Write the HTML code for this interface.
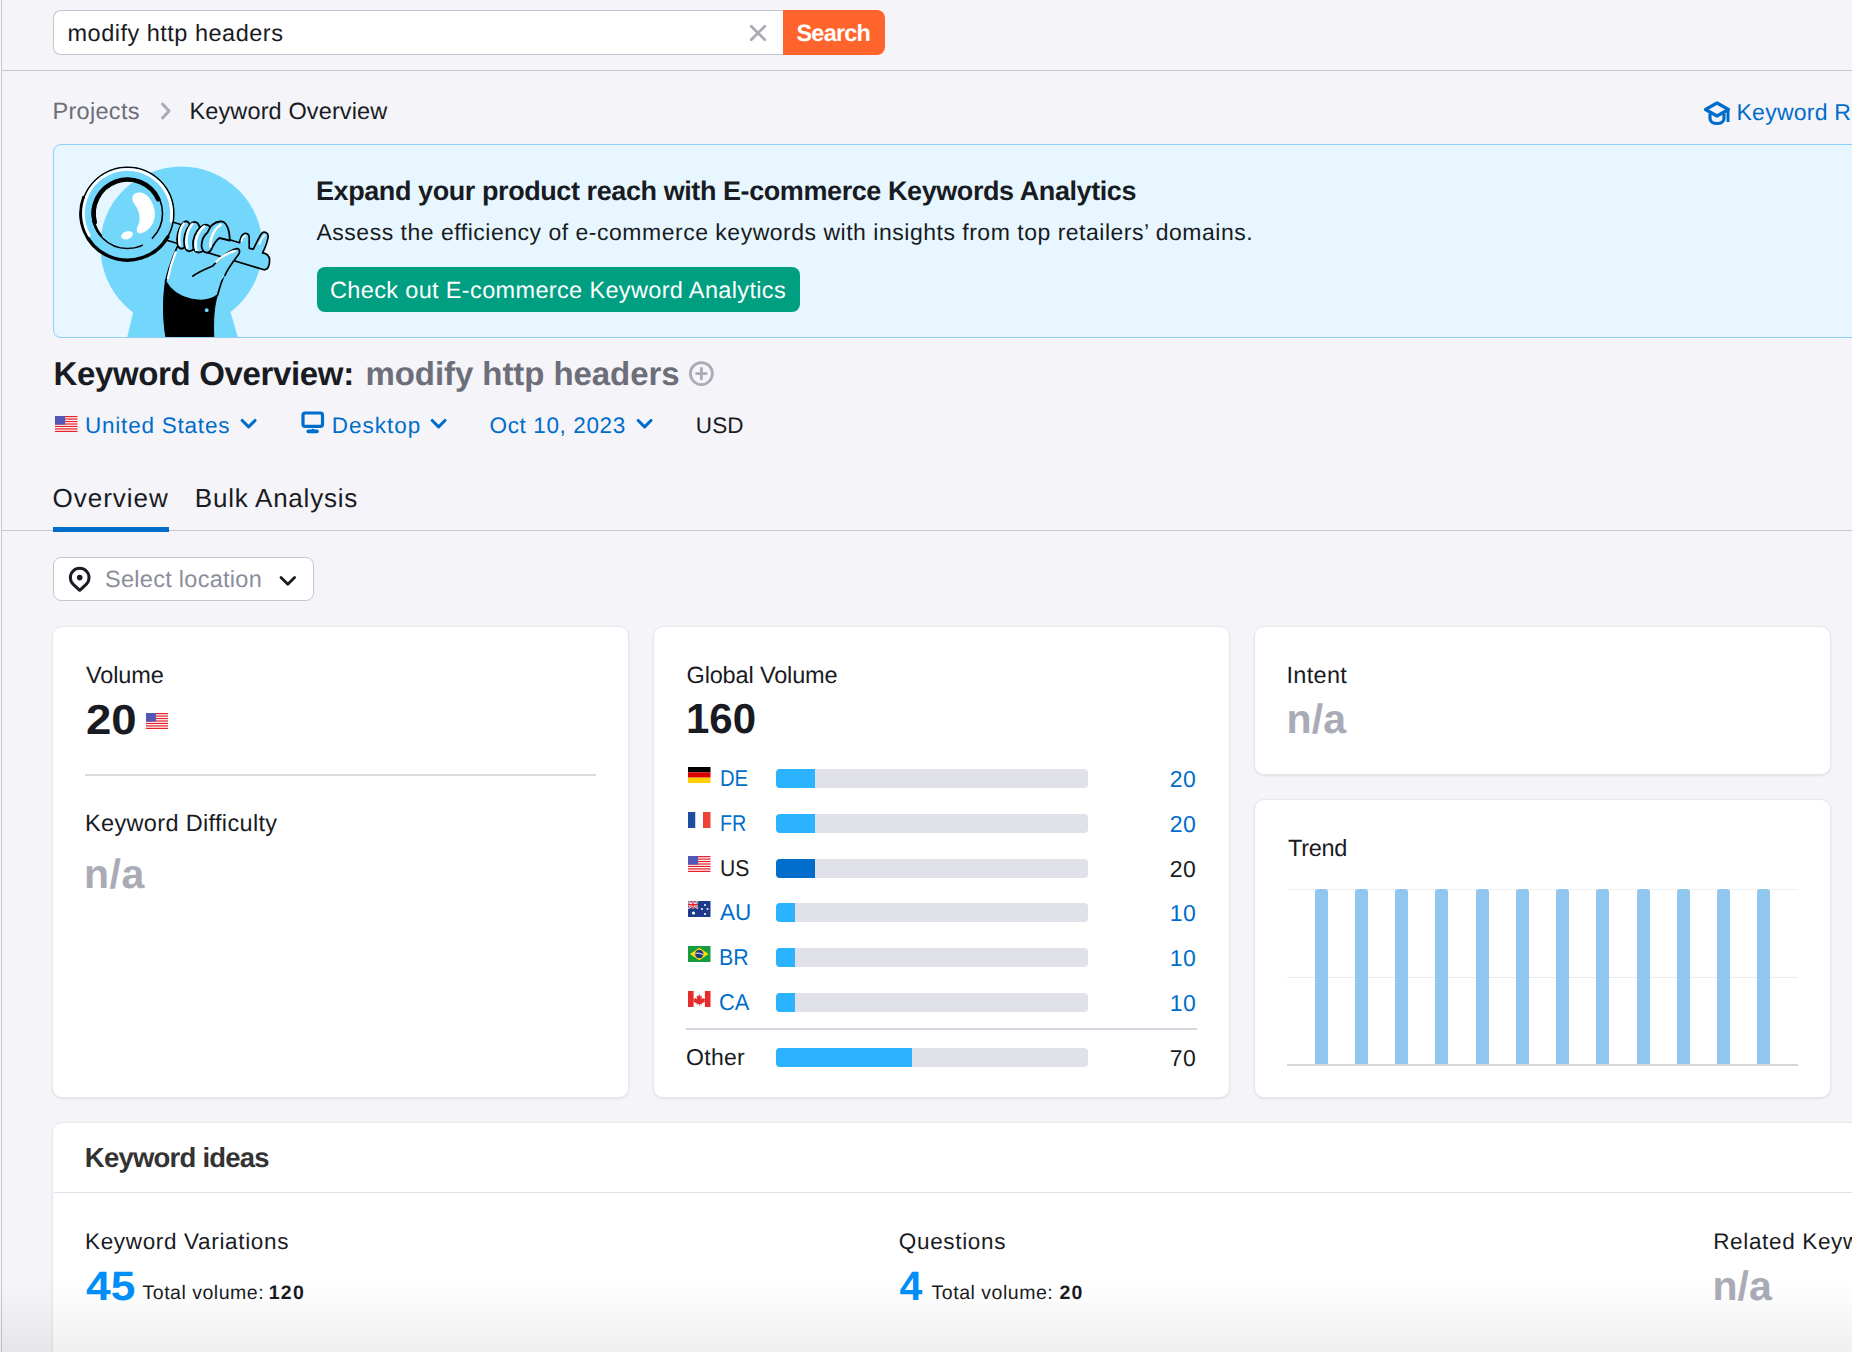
<!DOCTYPE html><html><head><meta charset="utf-8"><style>
*{box-sizing:border-box;margin:0;padding:0}
html,body{width:1852px;height:1352px;overflow:hidden}
body{background:#F4F4F9;font-family:"Liberation Sans",sans-serif;position:relative;text-rendering:geometricPrecision}
.t{position:absolute;white-space:nowrap}
.r{position:absolute}
svg{position:absolute;overflow:visible}
</style></head><body>
<div class="r" style="left:0px;top:0px;width:1px;height:1352px;background:#F8F9FC"></div>
<div class="r" style="left:1px;top:0px;width:1px;height:1352px;background:#C8C8CC"></div>
<div class="r" style="left:2px;top:70px;width:1850px;height:1px;background:#C4C7CF"></div>
<div class="r" style="left:53px;top:10px;width:731px;height:45px;background:#fff;border:1px solid #C4C7CF;border-right:none;border-radius:8px 0 0 8px"></div>
<div class="r" style="left:783px;top:10px;width:102px;height:45px;background:#FF642D;border-radius:0 8px 8px 0"></div>
<div class="t" style="left:67.50px;top:22.25px;font-size:23.5px;line-height:23.5px;font-weight:400;color:#191B23;letter-spacing:0.5px;">modify http headers</div>
<svg style="left:749px;top:24px" width="18" height="18"><path d="M2.2 2.2L15.8 15.8M15.8 2.2L2.2 15.8" stroke="#A9ABB6" stroke-width="2.8" stroke-linecap="round"/></svg>
<div class="t" style="left:796.50px;top:21.95px;font-size:23.5px;line-height:23.5px;font-weight:700;color:#fff;letter-spacing:-0.8px;">Search</div>
<div class="t" style="left:52.50px;top:99.95px;font-size:23.5px;line-height:23.5px;font-weight:400;color:#6C6E79;letter-spacing:0.3px;">Projects</div>
<svg style="left:158px;top:100px" width="16" height="22"><polyline points="4.5,4 11,11 4.5,18" fill="none" stroke="#A9ABB6" stroke-width="3" stroke-linecap="round" stroke-linejoin="round"/></svg>
<div class="t" style="left:189.50px;top:99.95px;font-size:23.5px;line-height:23.5px;font-weight:400;color:#191B23;letter-spacing:0.12px;">Keyword Overview</div>
<svg style="left:1703px;top:100px" width="28" height="26" viewBox="0 0 28 26"><path d="M14 3L25.5 9.5L14 16L2.5 9.5Z" fill="none" stroke="#006DCA" stroke-width="3.2" stroke-linejoin="round"/><path d="M7 13.5V18.5C7 21.5 10 23.5 14 23.5C18 23.5 21 21.5 21 18.5V13.5" fill="none" stroke="#006DCA" stroke-width="3.2"/><path d="M25 10V22" stroke="#006DCA" stroke-width="3"/></svg>
<div class="t" style="left:1736.50px;top:100.90px;font-size:23px;line-height:23px;font-weight:400;color:#006DCA;letter-spacing:0.25px;">Keyword Research course</div>
<div class="r" style="left:53px;top:144px;width:1850px;height:194px;background:#E8F7FF;border:1px solid #8FD0FB;border-radius:8px"></div>
<svg style="left:53px;top:144px" width="260" height="194" viewBox="53 144 260 194">
<defs>
<clipPath id="bc"><rect x="54" y="145" width="258" height="192" rx="7"/></clipPath>
<clipPath id="lens"><circle cx="127.5" cy="213.5" r="34"/></clipPath>
</defs>
<g clip-path="url(#bc)">
<circle cx="181.5" cy="247.5" r="81" fill="#73D7FC"/>
<path d="M136 300H227L238 338H127Z" fill="#73D7FC"/>
<path d="M165.5 281 C163 296 162.5 318 166 338 H213.8 C213 320 214 306 217.5 295 C206 303 182 306 165.5 281Z" fill="#000" stroke="#000" stroke-width="1"/>
<circle cx="206.7" cy="310.2" r="1.9" fill="#73D7FC"/>
<path d="M178.5 244 C173 256 168.5 268 165.5 281.5 C176 301 205 305 217.5 295.2 C220.5 284 226 267 236 252 L222 246 Z" fill="#73D7FC" stroke="#000" stroke-width="1.7" stroke-linejoin="round"/>
<path d="M176 251.5 C172 261 169.2 271 167.8 279" fill="none" stroke="#fff" stroke-width="2.2"/>

<path d="M171 221.5 L239.5 242.7 C240.5 238 241.5 235 243.2 234.2 C246 232 249.5 234 249.2 238 L249.2 248.3 L253.3 249.2 C256 244 259 237 262 233 C264 231 268.5 232.5 268.2 236.5 C267.5 242 264.5 249 262.6 252.9 C266 253.5 269.5 255.5 269.6 260 C269.6 266 268 270 264 269.8 L166 240 Z" fill="#73D7FC" stroke="#000" stroke-width="1.7" stroke-linejoin="round"/>
<path d="M241.5 241 C242 238 243 236.5 245 236" fill="none" stroke="#fff" stroke-width="1.8" stroke-linecap="round"/>
<path d="M259.5 244 C261 240 262.5 236.5 264.5 235.5" fill="none" stroke="#fff" stroke-width="1.8" stroke-linecap="round"/>
<circle cx="127.5" cy="213.5" r="46.3" fill="#73D7FC" stroke="#000" stroke-width="1.6"/>
<path d="M167.86 236.80 A46.6 46.6 0 0 1 83.71 197.56" fill="none" stroke="#000" stroke-width="3.4" stroke-linecap="round"/>
<path d="M89.31 235.55 A44.1 44.1 0 1 1 170.93 221.16" fill="none" stroke="#fff" stroke-width="2.8" stroke-linecap="round"/>
<circle cx="127.5" cy="213.5" r="34" fill="#E6F6FE"/>
<g clip-path="url(#lens)"><circle cx="176.9" cy="244.8" r="76.4" fill="#73D7FC"/></g>
<circle cx="127.5" cy="213.5" r="35" fill="none" stroke="#000" stroke-width="1.6"/>
<path d="M94.76 222.27 A33.9 33.9 0 0 1 158.22 199.17" fill="none" stroke="#000" stroke-width="4.6" stroke-linecap="round"/><path d="M100.99 235.74 A34.6 34.6 0 0 1 93.43 219.51" fill="none" stroke="#000" stroke-width="2.6" stroke-linecap="round"/>
<path d="M151.81 238.68 A35 35 0 0 1 142.84 244.96" fill="none" stroke="#73D7FC" stroke-width="2.6"/>
<path d="M134.5 194 C142 189 152.5 197 154.5 210 C156.5 222 149 231.5 141 233.3 C136 234 135.8 229 138.3 225 C141 219 139.5 211 135 205 C131.5 200 131.5 196 134.5 194 Z" fill="#fff"/>
<ellipse cx="127" cy="235.3" rx="6" ry="3.9" transform="rotate(-18 127 235.3)" fill="#fff"/>
<ellipse cx="183.8" cy="235" rx="6.2" ry="14" transform="rotate(12 183.8 235)" fill="#73D7FC" stroke="#000" stroke-width="1.8"/>
<path d="M180 246 C178 238 179.5 228 184.5 222.8" fill="none" stroke="#fff" stroke-width="2.3"/>
<ellipse cx="192" cy="236.6" rx="7.4" ry="15" transform="rotate(14 192 236.6)" fill="#73D7FC" stroke="#000" stroke-width="1.8"/>
<path d="M187.5 249 C185 240 187 229 193 223.3" fill="none" stroke="#fff" stroke-width="2.5"/>
<ellipse cx="202.3" cy="238.6" rx="8.2" ry="14.6" transform="rotate(22 202.3 238.6)" fill="#73D7FC" stroke="#000" stroke-width="1.8"/>
<path d="M196.5 251 C194 242 197.5 231 205 225.8" fill="none" stroke="#fff" stroke-width="2.5"/>
<path d="M204 251.5 C200 248 201 238 207.5 232.5 C210 226 215 222 220 221.5 C226 221 229.5 228 229.8 240.5 L219.4 238 C215 241 212.5 247 211 250 C209 253.5 206 253 204 251.5 Z" fill="#73D7FC" stroke="#000" stroke-width="1.8" stroke-linejoin="round"/>
<path d="M210.3 247.5 C210 238 214 228 221.5 224.5" fill="none" stroke="#fff" stroke-width="2.4"/>
<path d="M212.8 266 C220 258 229 250.5 236.5 248.6 C239.5 248.2 240.5 251.5 238.5 254.5 C232 263 227 270 224.8 276 L217 285 L200 269.5 Z" fill="#73D7FC"/>
<path d="M192.3 276.5 C199 271.5 206 269 212.8 265.9 C220 258 229 250.5 236.5 248.6 C239.5 248.2 240.5 251.5 238.5 254.5 C232 263 227 270 224.7 276" fill="none" stroke="#000" stroke-width="1.7" stroke-linejoin="round"/>
<path d="M215.5 262.5 C222 256 229 252 235.8 250.8" fill="none" stroke="#fff" stroke-width="2.2"/>
</g>
</svg>

<div class="t" style="left:316.00px;top:177.60px;font-size:27px;line-height:27px;font-weight:700;color:#191B23;letter-spacing:-0.42px;">Expand your product reach with E-commerce Keywords Analytics</div>
<div class="t" style="left:316.50px;top:221.00px;font-size:23px;line-height:23px;font-weight:400;color:#191B23;letter-spacing:0.51px;">Assess the efficiency of e-commerce keywords with insights from top retailers’ domains.</div>
<div class="r" style="left:317px;top:267px;width:483px;height:45px;background:#009F81;border-radius:8px"></div>
<div class="t" style="left:330.00px;top:279.15px;font-size:23.5px;line-height:23.5px;font-weight:400;color:#fff;letter-spacing:0.35px;">Check out E-commerce Keyword Analytics</div>
<div class="t" style="left:53.50px;top:357.00px;font-size:33px;line-height:33px;font-weight:700;color:#191B23;letter-spacing:-0.35px;">Keyword Overview:</div>
<div class="t" style="left:365.50px;top:357.00px;font-size:33px;line-height:33px;font-weight:700;color:#6C6E79;letter-spacing:-0.07px;">modify http headers</div>
<svg style="left:688px;top:360px" width="27" height="27"><circle cx="13.4" cy="13.6" r="11" fill="none" stroke="#A9ABB6" stroke-width="2.8"/><path d="M13.4 8.3V18.9M8.6 13.6H18.2" stroke="#A9ABB6" stroke-width="2.8" stroke-linecap="round"/></svg>
<svg style="left:54.8px;top:415.8px" width="22.5" height="16" viewBox="0 0 22.5 16"><rect width="22.5" height="16" fill="#fff"/><rect y="0.000" width="22.5" height="1.231" fill="#E8202A"/><rect y="2.462" width="22.5" height="1.231" fill="#E8202A"/><rect y="4.923" width="22.5" height="1.231" fill="#E8202A"/><rect y="7.385" width="22.5" height="1.231" fill="#E8202A"/><rect y="9.846" width="22.5" height="1.231" fill="#E8202A"/><rect y="12.308" width="22.5" height="1.231" fill="#E8202A"/><rect y="14.769" width="22.5" height="1.231" fill="#E8202A"/><rect width="10.12" height="8.615" fill="#5257B4"/></svg>
<div class="t" style="left:85.00px;top:414.65px;font-size:22.5px;line-height:22.5px;font-weight:400;color:#006DCA;letter-spacing:0.78px;">United States</div>
<svg style="left:239px;top:416px" width="20" height="16"><polyline points="3.2,4.5 9.6,10.8 16,4.5" fill="none" stroke="#006DCA" stroke-width="3.1" stroke-linecap="round" stroke-linejoin="round"/></svg>
<svg style="left:300px;top:410px" width="26" height="26"><rect x="3" y="3" width="19.5" height="13.3" rx="2" fill="none" stroke="#006DCA" stroke-width="3.2"/><path d="M8.2 21.4H17" stroke="#006DCA" stroke-width="3.6" stroke-linecap="round"/><path d="M10.6 20.2L12.9 18.5L15.2 20.2Z" fill="#006DCA"/></svg>
<div class="t" style="left:331.80px;top:414.65px;font-size:22.5px;line-height:22.5px;font-weight:400;color:#006DCA;letter-spacing:0.97px;">Desktop</div>
<svg style="left:429px;top:416px" width="20" height="16"><polyline points="3.2,4.5 9.6,10.8 16,4.5" fill="none" stroke="#006DCA" stroke-width="3.1" stroke-linecap="round" stroke-linejoin="round"/></svg>
<div class="t" style="left:489.50px;top:414.65px;font-size:22.5px;line-height:22.5px;font-weight:400;color:#006DCA;letter-spacing:0.63px;">Oct 10, 2023</div>
<svg style="left:634.5px;top:416px" width="20" height="16"><polyline points="3.2,4.5 9.6,10.8 16,4.5" fill="none" stroke="#006DCA" stroke-width="3.1" stroke-linecap="round" stroke-linejoin="round"/></svg>
<div class="t" style="left:695.80px;top:414.65px;font-size:22.5px;line-height:22.5px;font-weight:400;color:#191B23;letter-spacing:0.15px;">USD</div>
<div class="t" style="left:52.50px;top:485.20px;font-size:26px;line-height:26px;font-weight:400;color:#191B23;letter-spacing:1.0px;">Overview</div>
<div class="t" style="left:194.80px;top:485.20px;font-size:26px;line-height:26px;font-weight:400;color:#191B23;letter-spacing:0.77px;">Bulk Analysis</div>
<div class="r" style="left:2px;top:530px;width:1850px;height:1px;background:#C4C7CF"></div>
<div class="r" style="left:53px;top:527px;width:116px;height:5px;background:#006DCA"></div>
<div class="r" style="left:53px;top:557px;width:261px;height:44px;background:#fff;border:1px solid #C4C7CF;border-radius:8px"></div>
<svg style="left:66px;top:565px" width="28" height="28"><path d="M13.7 25.3L7.26 19.3A9.3 9.3 0 1 1 20.14 19.3Z" fill="none" stroke="#191B23" stroke-width="3" stroke-linejoin="round"/><circle cx="13.7" cy="12.6" r="2.8" fill="#191B23"/></svg>
<div class="t" style="left:105.00px;top:567.95px;font-size:23.5px;line-height:23.5px;font-weight:400;color:#8A8E9B;letter-spacing:0.28px;">Select location</div>
<svg style="left:278px;top:572px" width="20" height="16"><polyline points="3,5.5 9.8,12.2 16.6,5.5" fill="none" stroke="#191B23" stroke-width="2.8" stroke-linecap="round" stroke-linejoin="round"/></svg>
<div class="r" style="left:52px;top:626px;width:577px;height:472px;background:#fff;border:1px solid #E7E8EE;border-radius:10px;box-shadow:0 1px 2px rgba(25,27,35,.09)"></div>
<div class="r" style="left:653px;top:626px;width:577px;height:472px;background:#fff;border:1px solid #E7E8EE;border-radius:10px;box-shadow:0 1px 2px rgba(25,27,35,.09)"></div>
<div class="r" style="left:1254px;top:626px;width:577px;height:149px;background:#fff;border:1px solid #E7E8EE;border-radius:10px;box-shadow:0 1px 2px rgba(25,27,35,.09)"></div>
<div class="r" style="left:1254px;top:799px;width:577px;height:299px;background:#fff;border:1px solid #E7E8EE;border-radius:10px;box-shadow:0 1px 2px rgba(25,27,35,.09)"></div>
<div class="t" style="left:86.00px;top:664.25px;font-size:23.5px;line-height:23.5px;font-weight:400;color:#191B23;letter-spacing:-0.1px;">Volume</div>
<div class="t" style="left:85.50px;top:698.50px;font-size:42px;line-height:42px;font-weight:700;color:#191B23;letter-spacing:0px;transform:scaleX(1.085);transform-origin:0 0;">20</div>
<svg style="left:145.5px;top:713.2px" width="22" height="16" viewBox="0 0 22 16"><rect width="22" height="16" fill="#fff"/><rect y="0.000" width="22" height="1.231" fill="#E8202A"/><rect y="2.462" width="22" height="1.231" fill="#E8202A"/><rect y="4.923" width="22" height="1.231" fill="#E8202A"/><rect y="7.385" width="22" height="1.231" fill="#E8202A"/><rect y="9.846" width="22" height="1.231" fill="#E8202A"/><rect y="12.308" width="22" height="1.231" fill="#E8202A"/><rect y="14.769" width="22" height="1.231" fill="#E8202A"/><rect width="9.90" height="8.615" fill="#5257B4"/></svg>
<div class="r" style="left:85px;top:774px;width:511px;height:2px;background:#DADBE1"></div>
<div class="t" style="left:85.00px;top:812.25px;font-size:23.5px;line-height:23.5px;font-weight:400;color:#191B23;letter-spacing:0.34px;">Keyword Difficulty</div>
<div class="t" style="left:84.00px;top:854.20px;font-size:41px;line-height:41px;font-weight:700;color:#A9ABB6;letter-spacing:0.55px;">n/a</div>
<div class="t" style="left:686.50px;top:663.65px;font-size:23.5px;line-height:23.5px;font-weight:400;color:#191B23;letter-spacing:-0.15px;">Global Volume</div>
<div class="t" style="left:686.00px;top:698.20px;font-size:42px;line-height:42px;font-weight:700;color:#191B23;letter-spacing:0px;transform:scaleX(1.0);transform-origin:0 0;">160</div>
<svg style="left:687.8px;top:767.0px" width="22.5" height="16"><rect width="22.5" height="5.333" fill="#000"/><rect y="5.333" width="22.5" height="5.333" fill="#DD0000"/><rect y="10.667" width="22.5" height="5.333" fill="#FFCE00"/></svg>
<div class="t" style="left:719.50px;top:767.20px;font-size:23px;line-height:23px;font-weight:400;color:#006DCA;letter-spacing:0px;transform:scaleX(0.88);transform-origin:0 0;">DE</div>
<div class="r" style="left:776px;top:769.2px;width:312px;height:19px;background:#E0E1E9;border-radius:4px"></div>
<div class="r" style="left:776px;top:769.2px;width:39px;height:19px;background:#2BB3FF;border-radius:4px 0 0 4px"></div>
<div class="t" style="left:1100px;width:96.5px;text-align:right;top:768.20px;font-size:23px;line-height:23px;color:#006DCA;letter-spacing:0.6px;margin-right:-0.6px">20</div>
<svg style="left:687.8px;top:811.7px" width="22.5" height="16"><rect width="7.500" height="16" fill="#1C4FA0"/><rect x="7.500" width="7.500" height="16" fill="#fff"/><rect x="15.000" width="7.500" height="16" fill="#EE4135"/></svg>
<div class="t" style="left:719.50px;top:811.90px;font-size:23px;line-height:23px;font-weight:400;color:#006DCA;letter-spacing:0px;transform:scaleX(0.86);transform-origin:0 0;">FR</div>
<div class="r" style="left:776px;top:813.9px;width:312px;height:19px;background:#E0E1E9;border-radius:4px"></div>
<div class="r" style="left:776px;top:813.9px;width:39px;height:19px;background:#2BB3FF;border-radius:4px 0 0 4px"></div>
<div class="t" style="left:1100px;width:96.5px;text-align:right;top:812.90px;font-size:23px;line-height:23px;color:#006DCA;letter-spacing:0.6px;margin-right:-0.6px">20</div>
<svg style="left:687.8px;top:856.4px" width="22.5" height="16" viewBox="0 0 22.5 16"><rect width="22.5" height="16" fill="#fff"/><rect y="0.000" width="22.5" height="1.231" fill="#E8202A"/><rect y="2.462" width="22.5" height="1.231" fill="#E8202A"/><rect y="4.923" width="22.5" height="1.231" fill="#E8202A"/><rect y="7.385" width="22.5" height="1.231" fill="#E8202A"/><rect y="9.846" width="22.5" height="1.231" fill="#E8202A"/><rect y="12.308" width="22.5" height="1.231" fill="#E8202A"/><rect y="14.769" width="22.5" height="1.231" fill="#E8202A"/><rect width="10.12" height="8.615" fill="#5257B4"/></svg>
<div class="t" style="left:719.50px;top:856.60px;font-size:23px;line-height:23px;font-weight:400;color:#191B23;letter-spacing:0px;transform:scaleX(0.92);transform-origin:0 0;">US</div>
<div class="r" style="left:776px;top:858.6px;width:312px;height:19px;background:#E0E1E9;border-radius:4px"></div>
<div class="r" style="left:776px;top:858.6px;width:39px;height:19px;background:#006DCA;border-radius:4px 0 0 4px"></div>
<div class="t" style="left:1100px;width:96.5px;text-align:right;top:857.60px;font-size:23px;line-height:23px;color:#191B23;letter-spacing:0.6px;margin-right:-0.6px">20</div>
<svg style="left:687.8px;top:901.1px" width="22.5" height="16"><rect width="22.5" height="16" fill="#1E3A8A"/><path d="M0 0L10 7.5M10 0L0 7.5" stroke="#fff" stroke-width="2"/><path d="M0 0L10 7.5M10 0L0 7.5" stroke="#E0202A" stroke-width="0.8"/><path d="M5 0V7.5M0 3.75H10" stroke="#fff" stroke-width="2.4"/><path d="M5 0V7.5M0 3.75H10" stroke="#E0202A" stroke-width="1.3"/><circle cx="5.5" cy="12" r="1.6" fill="#fff"/><circle cx="17" cy="4" r="1" fill="#fff"/><circle cx="14" cy="8" r="1" fill="#fff"/><circle cx="19.5" cy="8" r="1" fill="#fff"/><circle cx="17" cy="13" r="1.1" fill="#fff"/></svg>
<div class="t" style="left:719.50px;top:901.30px;font-size:23px;line-height:23px;font-weight:400;color:#006DCA;letter-spacing:0px;transform:scaleX(0.98);transform-origin:0 0;">AU</div>
<div class="r" style="left:776px;top:903.3px;width:312px;height:19px;background:#E0E1E9;border-radius:4px"></div>
<div class="r" style="left:776px;top:903.3px;width:19px;height:19px;background:#2BB3FF;border-radius:4px 0 0 4px"></div>
<div class="t" style="left:1100px;width:96.5px;text-align:right;top:902.30px;font-size:23px;line-height:23px;color:#006DCA;letter-spacing:0.6px;margin-right:-0.6px">10</div>
<svg style="left:687.8px;top:945.8px" width="22.5" height="16"><rect width="22.5" height="16" fill="#169B3E"/><path d="M11.25 1.8L20.5 8.0L11.25 14.2L2 8.0Z" fill="#FEDF00"/><circle cx="11.25" cy="8.0" r="4.2" fill="#1E3A8A"/><path d="M7.3 7.3Q11 6.3 15.2 8.6" stroke="#fff" stroke-width="0.9" fill="none"/></svg>
<div class="t" style="left:718.50px;top:946.00px;font-size:23px;line-height:23px;font-weight:400;color:#006DCA;letter-spacing:0px;transform:scaleX(0.93);transform-origin:0 0;">BR</div>
<div class="r" style="left:776px;top:948.0px;width:312px;height:19px;background:#E0E1E9;border-radius:4px"></div>
<div class="r" style="left:776px;top:948.0px;width:19px;height:19px;background:#2BB3FF;border-radius:4px 0 0 4px"></div>
<div class="t" style="left:1100px;width:96.5px;text-align:right;top:947.00px;font-size:23px;line-height:23px;color:#006DCA;letter-spacing:0.6px;margin-right:-0.6px">10</div>
<svg style="left:687.8px;top:990.5px" width="22.5" height="16"><rect width="22.5" height="16" fill="#fff"/><rect width="5.6" height="16" fill="#E52B2B"/><rect x="16.9" width="5.6" height="16" fill="#E52B2B"/><path d="M11.25 3L12.4 5.4L13.9 4.6L13.4 8.3L15.2 6.8L15.7 8L17.2 7.8L16.5 9.8L17.3 10.4L13.6 12.4L13.8 13.4L11.6 13.1V15H10.9V13.1L8.7 13.4L8.9 12.4L5.2 10.4L6 9.8L5.3 7.8L6.8 8L7.3 6.8L9.1 8.3L8.6 4.6L10.1 5.4Z" fill="#E52B2B"/></svg>
<div class="t" style="left:718.50px;top:990.70px;font-size:23px;line-height:23px;font-weight:400;color:#006DCA;letter-spacing:0px;transform:scaleX(0.95);transform-origin:0 0;">CA</div>
<div class="r" style="left:776px;top:992.7px;width:312px;height:19px;background:#E0E1E9;border-radius:4px"></div>
<div class="r" style="left:776px;top:992.7px;width:19px;height:19px;background:#2BB3FF;border-radius:4px 0 0 4px"></div>
<div class="t" style="left:1100px;width:96.5px;text-align:right;top:991.70px;font-size:23px;line-height:23px;color:#006DCA;letter-spacing:0.6px;margin-right:-0.6px">10</div>
<div class="r" style="left:686px;top:1028px;width:511px;height:2px;background:#D5D7DE"></div>
<div class="t" style="left:686.00px;top:1046.20px;font-size:23px;line-height:23px;font-weight:400;color:#191B23;letter-spacing:0.3px;">Other</div>
<div class="r" style="left:776px;top:1048px;width:312px;height:19px;background:#E0E1E9;border-radius:4px"></div>
<div class="r" style="left:776px;top:1048px;width:136px;height:19px;background:#2BB3FF;border-radius:4px 0 0 4px"></div>
<div class="t" style="left:1100px;width:96.5px;text-align:right;top:1047.20px;font-size:23px;line-height:23px;color:#191B23;letter-spacing:0.6px;margin-right:-0.6px">70</div>
<div class="t" style="left:1286.50px;top:663.65px;font-size:23.5px;line-height:23.5px;font-weight:400;color:#191B23;letter-spacing:0.3px;">Intent</div>
<div class="t" style="left:1286.50px;top:699.20px;font-size:41px;line-height:41px;font-weight:700;color:#A9ABB6;letter-spacing:0.15px;">n/a</div>
<div class="t" style="left:1288.00px;top:836.75px;font-size:23.5px;line-height:23.5px;font-weight:400;color:#191B23;letter-spacing:-0.3px;">Trend</div>
<div class="r" style="left:1287px;top:889px;width:511px;height:1px;background:#EEF0F1"></div>
<div class="r" style="left:1287px;top:977px;width:511px;height:1px;background:#E8EBEC"></div>
<div class="r" style="left:1287px;top:1064px;width:511px;height:2px;background:#D5D7DC"></div>
<div class="r" style="left:1315px;top:889px;width:13px;height:175px;background:#91C6EF;border-radius:3px 3px 0 0"></div>
<div class="r" style="left:1355px;top:889px;width:13px;height:175px;background:#91C6EF;border-radius:3px 3px 0 0"></div>
<div class="r" style="left:1395px;top:889px;width:13px;height:175px;background:#91C6EF;border-radius:3px 3px 0 0"></div>
<div class="r" style="left:1435px;top:889px;width:13px;height:175px;background:#91C6EF;border-radius:3px 3px 0 0"></div>
<div class="r" style="left:1476px;top:889px;width:13px;height:175px;background:#91C6EF;border-radius:3px 3px 0 0"></div>
<div class="r" style="left:1516px;top:889px;width:13px;height:175px;background:#91C6EF;border-radius:3px 3px 0 0"></div>
<div class="r" style="left:1556px;top:889px;width:13px;height:175px;background:#91C6EF;border-radius:3px 3px 0 0"></div>
<div class="r" style="left:1596px;top:889px;width:13px;height:175px;background:#91C6EF;border-radius:3px 3px 0 0"></div>
<div class="r" style="left:1637px;top:889px;width:13px;height:175px;background:#91C6EF;border-radius:3px 3px 0 0"></div>
<div class="r" style="left:1677px;top:889px;width:13px;height:175px;background:#91C6EF;border-radius:3px 3px 0 0"></div>
<div class="r" style="left:1717px;top:889px;width:13px;height:175px;background:#91C6EF;border-radius:3px 3px 0 0"></div>
<div class="r" style="left:1757px;top:889px;width:13px;height:175px;background:#91C6EF;border-radius:3px 3px 0 0"></div>
<div class="r" style="left:52px;top:1122px;width:1850px;height:300px;background:#fff;border:1px solid #E7E8EE;border-radius:10px;box-shadow:0 1px 2px rgba(25,27,35,.09)"></div>
<div class="t" style="left:84.80px;top:1144.25px;font-size:27.5px;line-height:27.5px;font-weight:700;color:#333333;letter-spacing:-0.77px;">Keyword ideas</div>
<div class="r" style="left:54px;top:1192px;width:1850px;height:1px;background:#E0E1E9"></div>
<div class="t" style="left:85.00px;top:1230.65px;font-size:22.5px;line-height:22.5px;font-weight:400;color:#191B23;letter-spacing:0.66px;">Keyword Variations</div>
<div class="t" style="left:85.50px;top:1266.20px;font-size:41px;line-height:41px;font-weight:700;color:#008FF8;letter-spacing:0px;transform:scaleX(1.08);transform-origin:0 0;">45</div>
<div class="t" style="left:142.50px;top:1283.65px;font-size:19.5px;line-height:19.5px;font-weight:400;color:#191B23;letter-spacing:0.52px;">Total volume:</div>
<div class="t" style="left:268.80px;top:1283.65px;font-size:19.5px;line-height:19.5px;font-weight:700;color:#191B23;letter-spacing:1.2px;">120</div>
<div class="t" style="left:898.80px;top:1230.75px;font-size:22.5px;line-height:22.5px;font-weight:400;color:#191B23;letter-spacing:0.66px;">Questions</div>
<div class="t" style="left:899.50px;top:1265.90px;font-size:41px;line-height:41px;font-weight:700;color:#008FF8;letter-spacing:0px;transform:scaleX(1.0);transform-origin:0 0;">4</div>
<div class="t" style="left:931.60px;top:1283.65px;font-size:19.5px;line-height:19.5px;font-weight:400;color:#191B23;letter-spacing:0.52px;">Total volume:</div>
<div class="t" style="left:1059.40px;top:1283.65px;font-size:19.5px;line-height:19.5px;font-weight:700;color:#191B23;letter-spacing:1.2px;">20</div>
<div class="t" style="left:1713.20px;top:1230.75px;font-size:22.5px;line-height:22.5px;font-weight:400;color:#191B23;letter-spacing:0.66px;">Related Keywords</div>
<div class="t" style="left:1712.50px;top:1266.10px;font-size:41px;line-height:41px;font-weight:700;color:#A9ABB6;letter-spacing:0.0px;">n/a</div>
<div class="r" style="left:0px;top:1282px;width:1852px;height:70px;background:linear-gradient(rgba(25,25,35,0),rgba(25,25,35,.068))"></div>
</body></html>
